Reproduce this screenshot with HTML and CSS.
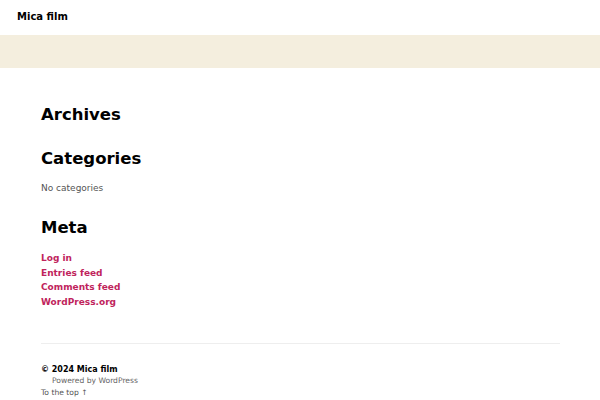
FILE: index.html
```html
<!DOCTYPE html>
<html>
<head>
<meta charset="utf-8">
<link rel="stylesheet" href="styles.css">
</head>
<body>
<header class="site-header">
  <div class="site-title">Mica film</div>
</header>
<div class="band"></div>
<main class="content">
  <section class="widget">
    <h2>Archives</h2>
  </section>
  <section class="widget">
    <h2>Categories</h2>
    <p class="muted">No categories</p>
  </section>
  <section class="widget">
    <h2>Meta</h2>
    <ul class="links">
      <li><a href="#">Log in</a></li>
      <li><a href="#">Entries feed</a></li>
      <li><a href="#">Comments feed</a></li>
      <li><a href="#">WordPress.org</a></li>
    </ul>
  </section>
</main>
<footer class="site-footer">
  <div class="copy">© 2024 Mica film</div>
  <div class="powered">Powered by WordPress</div>
  <div class="top">To the top ↑</div>
</footer>
</body>
</html>
```

FILE: styles.css
```css
html, body {
  margin: 0;
  padding: 0;
  background: #fff;
  font-family: "DejaVu Sans", sans-serif;
  color: #000;
}
.site-header {
  height: 35px;
  padding: 0 17px;
  display: flex;
  align-items: center;
}
.site-title {
  font-weight: bold;
  font-size: 10px;
  margin-top: -2px;
}
.band {
  height: 33px;
  background: #f4eede;
}
.content {
  padding: 37px 41px 0;
}
.widget h2 {
  font-size: 16.5px;
  line-height: 20px;
  margin: 0;
  font-weight: bold;
}
.widget {
  margin-bottom: 24px;
}
.muted {
  margin: 12px 0 -1px;
  font-size: 9px;
  line-height: 14px;
  color: #555;
}
.links {
  list-style: none;
  margin: 13px 0 0;
  padding: 0;
}
.links li {
  font-size: 9px;
  line-height: 14.7px;
  font-weight: bold;
}
.links a {
  color: #c0245c;
  text-decoration: none;
}
.site-footer {
  margin: 33px 40px 0 41px;
  border-top: 1px solid #eeeeee;
  padding-top: 20px;
  font-size: 7.6px;
  line-height: 11.5px;
}
.copy {
  font-weight: bold;
  font-size: 8px;
}
.powered {
  padding-left: 11px;
  color: #666;
}
.top {
  color: #555;
}
```
